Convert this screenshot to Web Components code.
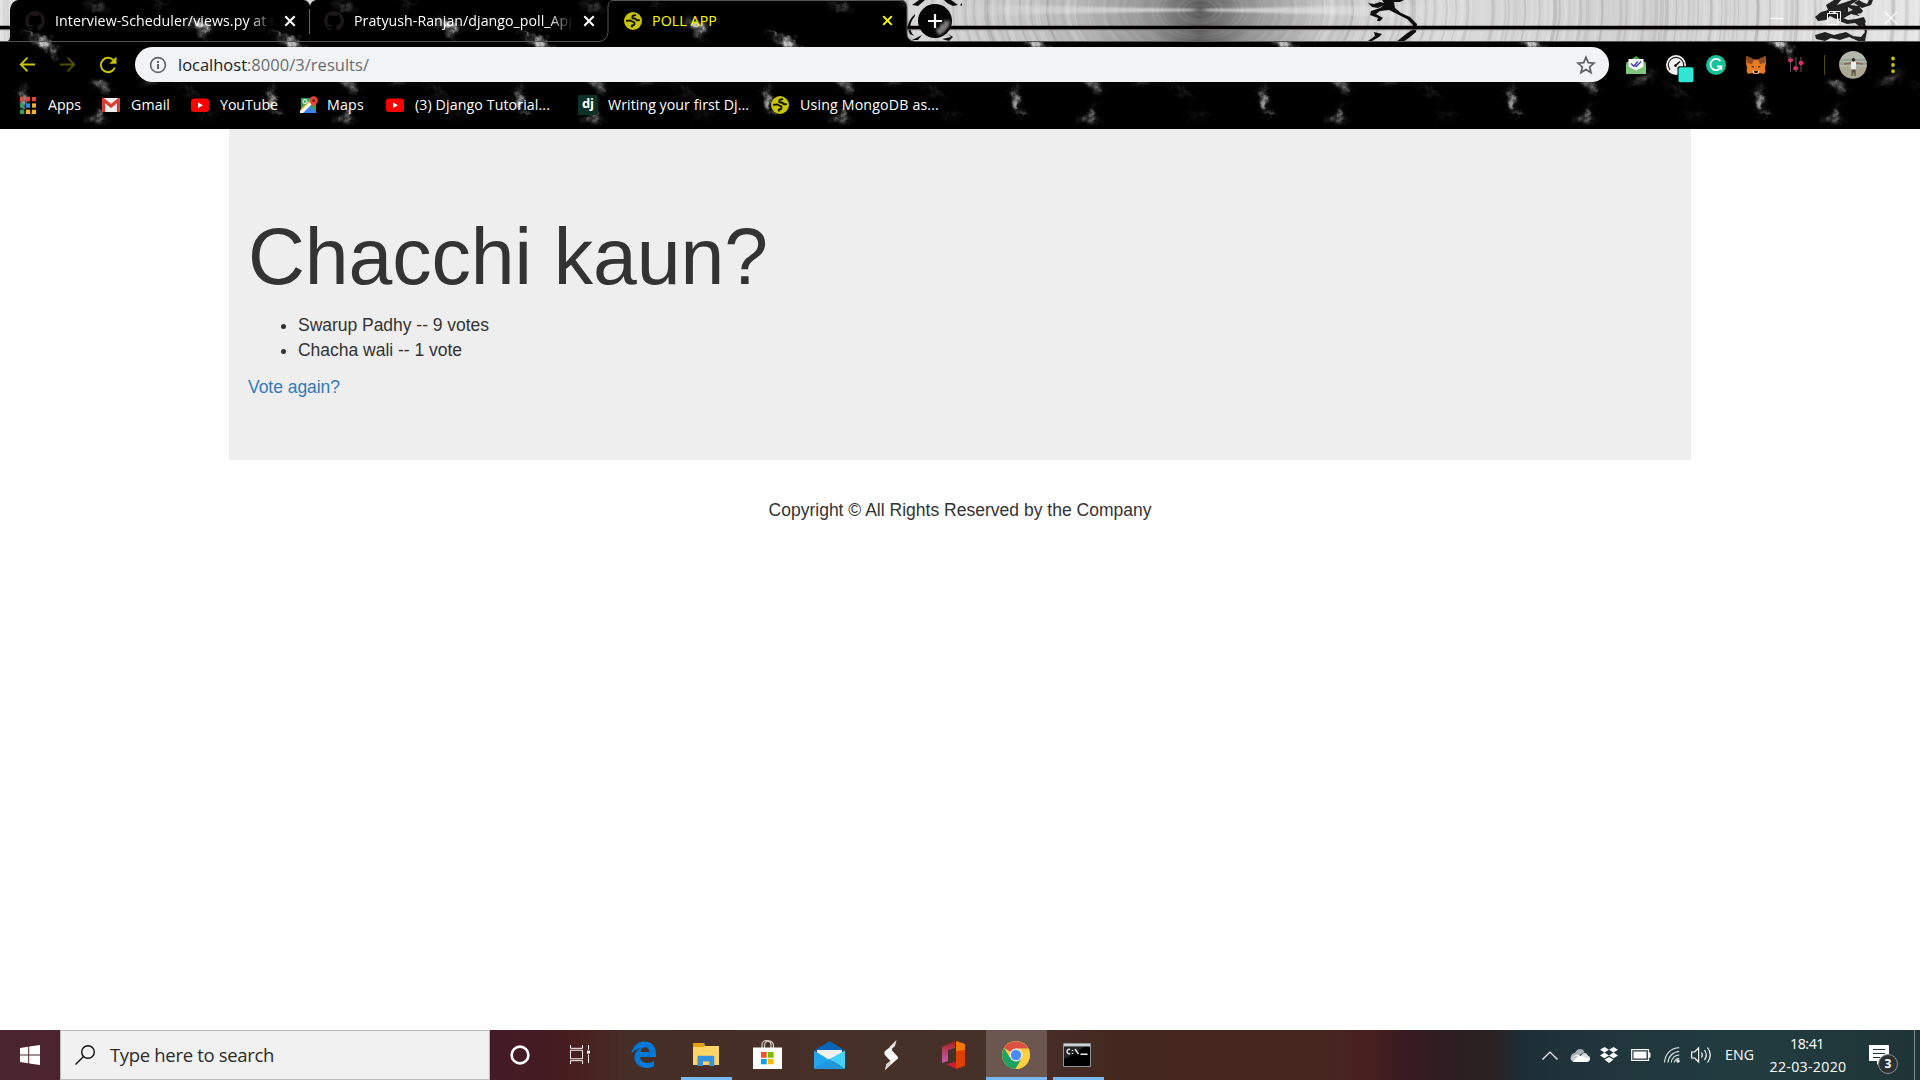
<!DOCTYPE html>
<html lang="en"><head><meta charset="utf-8"><title>POLL APP</title>
<style>
html,body{margin:0;height:100%;overflow:hidden;background:#fff}
body{font-family:"Open Sans","Noto Sans",sans-serif}
</style></head><body>
<app-desktop></app-desktop>
<script>
const define=(name,html,setup)=>{
  const t=document.createElement('template');t.innerHTML=html;
  customElements.define(name,class extends HTMLElement{
    constructor(){super();this.attachShadow({mode:'open'}).append(t.content.cloneNode(true));}
    connectedCallback(){if(setup)setup(this,this.shadowRoot);}
  });
};
const globe='<circle cx="9" cy="9" r="9" fill="#c8c400"/><path d="M12 2.800L8.600 3.900l-.3 2.300 3.300.6 1.200 1.500 3-.2M2 8.900l4.200-.4 4.200 2-.2 2.300-2.500.9.700 1.800" fill="none" stroke="#111" stroke-width="1.900" stroke-linejoin="round"/>';
const yt='<rect y="2.500" width="18" height="13.500" rx="3" fill="#f00"/><path d="M7 6.500l5 2.800-5 2.800z" fill="#fff"/>';
const icons={
github:['0 0 16 16','<path fill="#1b1718" fill-rule="evenodd" d="M8 0C3.580 0 0 3.580 0 8c0 3.540 2.290 6.530 5.470 7.590.4.070.55-.17.55-.38v-1.490c-2.010.37-2.530-.49-2.690-.94-.09-.23-.48-.94-.82-1.130-.28-.15-.68-.52-.01-.53.63-.01 1.080.58 1.230.82.72 1.210 1.870.87 2.330.66.07-.52.28-.87.51-1.070-1.780-.2-3.640-.89-3.640-3.950 0-.87.31-1.590.82-2.150-.08-.2-.36-1.020.08-2.120 0 0 .67-.21 2.200.82a7.700 7.700 0 0 1 4 0c1.530-1.040 2.200-.82 2.200-.82.44 1.100.16 1.920.08 2.120.51.56.82 1.270.82 2.150 0 3.070-1.870 3.750-3.650 3.950.29.25.54.73.54 1.480v2.200c0 .21.15.46.55.38A8 8 0 0 0 8 0z"/>'],
globe:['0 0 18 18',globe],
x:['0 0 12 12','<path d="M1.300 1.300l9.400 9.400M10.700 1.300l-9.400 9.400" stroke="currentColor" stroke-width="2.100"/>'],
back:['0 0 18 18','<path d="M17 9H2M9 1.800L1.800 9 9 16.200" fill="none" stroke="currentColor" stroke-width="2"/>'],
fwd:['0 0 18 18','<path d="M1 9h15M9 1.800L16.200 9 9 16.200" fill="none" stroke="currentColor" stroke-width="2"/>'],
reload:['0 0 18 18','<path d="M15.800 11.500A7.200 7.200 0 1 1 14.300 4" fill="none" stroke="currentColor" stroke-width="2"/><path d="M17.500.5v7.300h-7.300z" fill="currentColor"/>'],
info:['0 0 18 18','<circle cx="9" cy="9" r="7.400" fill="none" stroke="#5f6368" stroke-width="1.600"/><path d="M8 8h2v5H8zM8 5h2v1.900H8z" fill="#5f6368"/>'],
star:['0 0 18 18','<path d="M9 2l2.050 4.850 5.200.45-3.950 3.450 1.200 5.100L9 13.150l-4.500 2.700 1.200-5.100L1.750 7.300l5.200-.45z" fill="none" stroke="#5f6368" stroke-width="1.600"/>'],
apps:['0 0 16 16',(()=>{const c=['#e8453c','#e8453c','#e8453c','#2f9e58','#2d8bf0','#f0b02d','#2f9e58','#f0b02d','#f0b02d'];return c.map((f,i)=>`<rect x="${i%3*6}" y="${Math.floor(i/3)*6}" width="4" height="4" fill="${f}"/>`).join('')})()],
gmail:['0 0 18 14','<rect width="18" height="14" rx="1.200" fill="#eee"/><path d="M1.600 14V2L9 8l7.400-6v12" fill="none" stroke="#d6362c" stroke-width="3"/><path d="M3 0h12L9 5z" fill="#f7f7f7"/><path d="M.5.6L9 7.600 17.500.6" fill="none" stroke="#dd4236" stroke-width="2"/>'],
yt:['0 0 18 18',yt],
maps:['0 0 18 18','<path d="M1 2h15v15H1z" fill="#2fa35a"/><path d="M1 17l8-8 8 8z" fill="#3e82f1"/><path d="M0 14.500L14 2l2 2L3 17H0z" fill="#fff"/><path d="M1 13L12 2h2L1 15z" fill="#f4c430"/><circle cx="5" cy="5.500" r="1.900" fill="none" stroke="#d8f0df" stroke-width="1.200"/><path d="M13.500 12c-.4-3-4-4-4-7.500a4.200 4.200 0 0 1 8.400 0c0 3.500-4 4.500-4.400 7.500z" fill="#e2453a"/><circle cx="13.700" cy="4.500" r="1.500" fill="#7d2019"/>'],
mailext:['0 0 20 18','<path d="M0 7l10-7 10 7z" fill="#4b9f4c"/><rect y="6" width="20" height="12" rx="1.500" fill="#69b567"/><path d="M2.500 3h15v8L10 15 2.500 11z" fill="#fff"/><path d="M0 8.500l3 2.500 7 3.500 7-3.500 3-2.500V17a1 1 0 0 1-1 1H1a1 1 0 0 1-1-1z" fill="#80c67c"/><path d="M5 7.500l2.800 2.800 4-4.800M9 9.500l1.300 1L15 5.500" fill="none" stroke="#453bc4" stroke-width="1.400"/>'],
gauge:['0 0 28 28','<circle cx="10" cy="10" r="10" fill="#f1f1f1"/><circle cx="10" cy="10" r="7.700" fill="none" stroke="#222" stroke-width="1.200" stroke-dasharray="36 13" transform="rotate(140 10 10)"/><path d="M9.500 10.500L14 6.500" stroke="#111" stroke-width="1.600"/><circle cx="9.600" cy="10.600" r="1.400" fill="#111"/><rect x="11.500" y="11.300" width="16.500" height="16.500" rx="2" fill="#000"/><rect x="12.500" y="12.300" width="15" height="15" rx="1.800" fill="#2ee6d3"/>'],
grammar:['0 0 20 20','<circle cx="10" cy="10" r="10" fill="#15c39a"/><path d="M14.400 6A5.600 5.600 0 1 0 15.300 11.500H11M15.300 11v4" fill="none" stroke="#fff" stroke-width="1.800"/>'],
fox:['0 0 20 18','<path d="M.5 0L8 3.500h4L19.500 0 20 7l-1 5 .5 3-1.500 3-4-1-2 1H8l-2-1-4 1-1.500-3L1 12 0 7z" fill="#e97a20"/><path d="M.5 0L8 3.500 6 8 1 7zM19.500 0L12 3.500 14 8l5-1z" fill="#8f4b22"/><path d="M5 10l3 .3L7.500 12zM15 10l-3 .3.500 1.700z" fill="#263340"/><path d="M6 14l1.500 3.500h5L14 14l-2 1H8z" fill="#dbc5b8"/><path d="M8 15h4l-.5 2h-3z" fill="#171717"/>'],
sliders:['0 0 16 16','<path d="M2.500 1v14M8 1v14M13 1v14" stroke="#59505a" stroke-width="1.100"/><g fill="#c02d5d" stroke="#fa3b7c"><ellipse cx="2.500" cy="4" rx="2" ry="1.100"/><ellipse cx="7.700" cy="11.500" rx="2" ry="1.400"/><ellipse cx="13" cy="6.500" rx="2" ry="1.400"/></g>'],
avatar:['0 0 28 28','<defs><clipPath id="c"><circle cx="14" cy="14" r="13.800"/></clipPath></defs><g clip-path="url(#c)"><path d="M0 0h28v28H0z" fill="#aaa894"/><path d="M0 0h28v8H0z" fill="#b3b7ab"/><path d="M0 8h28v6H0z" fill="#96a496"/><path d="M0 10.500h28M0 15h28" stroke="#b9beb2"/><path d="M5 13l7-1h5l7 1" fill="none" stroke="#8a6656" stroke-width="1.300"/><circle cx="14.500" cy="8.700" r="1.700" fill="#2c211e"/><path d="M12 11h5v7.500h-5z" fill="#ecebf0"/><path d="M12.500 18.500h4.200v6.500h-1.200l-1-4-1 4h-1z" fill="#655446"/></g>'],
dots:['0 0 6 18','<g fill="#c8c400"><circle cx="3" cy="2.500" r="1.900"/><circle cx="3" cy="9" r="1.900"/><circle cx="3" cy="15.200" r="1.900"/></g>'],
plus:['0 0 34 34','<circle cx="17" cy="17" r="17" fill="#040404"/><path d="M19 29l-1-5 3 1 2-6 2 2 2-6 2 3 3-3-1 7-4 5-5 4z" fill="#999" opacity=".8" filter="url(#b)"/><defs><filter id="b"><feGaussianBlur stdDeviation="1.200"/></filter></defs><path d="M17 10v14M10 17h14" stroke="#fff" stroke-width="2.200"/>'],
min:['0 0 14 14','<path d="M.5 7.500h13" stroke="#fff"/>'],
restore:['0 0 14 14','<path d="M.5 2.500h10v11H.5zM2.500 2.500v-2h11v10h-3" fill="none" stroke="#fff"/>'],
close:['0 0 14 14','<path d="M.7.7l12.600 12.600M13.300.7L.7 13.300" stroke="#fff" stroke-width="1.200"/>'],
win:['0 0 20 20','<path d="M0 2.900l8.200-1.100v7.700H0zM9.200 1.600L20 0v9.500H9.200zM0 10.500h8.200v7.700L0 17.100zM9.200 10.500H20V20L9.200 18.400z" fill="#fff"/>'],
search:['0 0 20 20','<circle cx="13" cy="7" r="6.300" fill="none" stroke="#111" stroke-width="1.400"/><path d="M8.500 11.500L.5 19.500" stroke="#111" stroke-width="1.400"/>'],
cortana:['0 0 20 20','<circle cx="10" cy="10" r="8.400" fill="none" stroke="#fff" stroke-width="2.600"/>'],
task:['0 0 20 20','<path d="M.5 0v3.500h12V0M.5 20v-3.500h12V20M.5 5.500h12v9H.5zM18.500 0v5M18.500 10v9" fill="none" stroke="#fff"/><path d="M17 6h3v3h-3z" fill="#fff"/>'],
edge:['0 0 25 27','<path d="M0 13C2 5 7 .5 13.500.5 20.500.5 25 5.500 25 12v4H9c.3 4 4 6 8 6 2.500 0 4.500-.8 6-2v5.200c-2 1.200-4.600 1.800-7.300 1.800C8.500 27 3 22 3.500 15.500 3.800 11.500 6.500 8.500 10 7 6 7.500 2.500 9.500 0 13zM9.500 11h8.700c0-2.800-1.500-4.700-4.200-4.700-2.500 0-4.200 2-4.500 4.700z" fill="#0078d7"/>'],
folder:['0 0 26 23','<path d="M0 0h10.500L12 3H26v19H0z" fill="#ffd768"/><path d="M0 0h11l1 2-1 2H0z" fill="#e3a007"/><path d="M0 5h26v17H0z" fill="#ffd666"/><path d="M4.500 23v-9q0-1.200 1-1.200h14.800q1 0 1 1.200v9h-5v-4.500H10V23z" fill="#3893dd"/>'],
store:['0 0 29 29','<path d="M9 9V5.500a4.500 4.500 0 0 1 9-1V9M11.500 9V5.500a4.500 4.500 0 0 1 9 0V9" fill="none" stroke="#cfc9c6" stroke-width="1.300"/><path d="M0 7.500h29V29H0z" fill="#fff"/><path d="M8 12h5.700v5.700H8z" fill="#f25022"/><path d="M15 12h5.700v5.700H15z" fill="#7fba00"/><path d="M8 19h5.700v5.300H8z" fill="#00a4ef"/><path d="M15 19h5.700v5.300H15z" fill="#ffb900"/>'],
mail:['0 0 31 28','<path d="M0 9.500L15.500 0 31 9.500z" fill="#0964b5"/><path d="M3 9h25v11H3z" fill="#f1f1f1"/><path d="M0 9.500L15.500 19 0 28z" fill="#22a5ec"/><path d="M31 9.500L15.500 18 31 28z" fill="#45d1fa"/><path d="M0 28l15.500-10L31 28z" fill="#2197e2"/>'],
bolt:['0 0 14 30','<path d="M8 5.500L.5 11.500v3l6 6.500L2.500 24 1 30l6-5.500 7-6v-1.500L8 10.500z" fill="#fff"/><path d="M12.500 0L6 6.500 5.500 11 11 6z" fill="#e9e5e4"/><path d="M6.500 21L2.500 24 1 30l6-5.500z" fill="#d9d4d2"/>'],
office:['0 0 23 28','<defs><linearGradient id="o" x2="0" y2="1"><stop stop-color="#a42018"/><stop offset=".55" stop-color="#bb4477"/><stop offset="1" stop-color="#bd5eb4"/></linearGradient></defs><path d="M0 6L13 0v7L6 9v11l-6 2z" fill="url(#o)"/><path d="M14 0l9 3v22l-9 3z" fill="#dc4103"/><path d="M14 0l9 3v6l-9 1z" fill="#ef7904"/><path d="M4 23l10-2v7z" fill="#cc1d35"/>'],
chrome:['0 0 28 28','<circle cx="14" cy="14" r="14" fill="#ffcd42"/><path d="M14 14L1.900 7A14 14 0 0 1 26.100 7.200z" fill="#dd5144"/><path d="M1.900 7A14 14 0 0 0 13.500 28L20 17.500 14 14 8 16.500z" fill="#1ba261"/><path d="M14 7.500h12.300A14 14 0 0 1 13.500 28l6-10.500z" fill="#ffcd42"/><circle cx="14" cy="14" r="6.500" fill="#f1f1f1"/><circle cx="14" cy="14" r="5.200" fill="#4c8bf5"/>'],
cmd:['0 0 28 24','<path d="M.5.5h27v23H.5z" fill="#000" stroke="#8f969c"/><path d="M1 1h26v2.500H1z" fill="#c8d0d6"/><path d="M1 4h20L6 14 1 16z" fill="#252525"/><path d="M7 6.500C3 5 3 12 7 10.500M9.500 7v1M9.500 10v1M12 6l3.500 5M17.500 11.300h7" fill="none" stroke="#eee" stroke-width="1.400"/>'],
chev:['0 0 16 9','<path d="M.5 8.500L8 1l7.500 7.500" fill="none" stroke="#fff" stroke-width="1.200"/>'],
cloud:['0 0 20 13','<path d="M1 10C0 6 3 4 5 4c2-5 8-5 9.500-1L8 7z" fill="#a9b2b4"/><path d="M3.500 13A3.500 3.500 0 0 1 4 7.200C8 4 10 7 11 7c2-4 6-3 6.500-.5A3.300 3.300 0 0 1 17 13z" fill="#fff"/><path d="M1 8c2-2 5-2 7-.5l-5 5C1 12 0 10 1 8z" fill="#c7cdce"/><path d="M11 7c2-4 6-3 6.500-.5 1.500.3 2.500 1.500 2.300 3z" fill="#d5dadb"/>'],
dropbox:['0 0 18 16','<path d="M4.500 0L9 2.800 4.500 5.600 0 2.800zM13.500 0L18 2.800l-4.500 2.800L9 2.800zM4.500 5.600L9 8.400l-4.500 2.800L0 8.400zM13.500 5.600L18 8.400l-4.500 2.800L9 8.400zM9 10l4.500 2.500L9 16l-4.500-3.500z" fill="#fff"/>'],
battery:['0 0 20 12','<path d="M.7.7h16.800v10.600H.7z" fill="none" stroke="#fff" stroke-width="1.200"/><path d="M2.500 2.500h13v7h-13zM18 3.500h1.500v5H18z" fill="#fff"/>'],
wifi:['0 0 16 16','<path d="M.7 15.500A14.500 14.500 0 0 1 15.300.7M4 15.500A11.500 11.500 0 0 1 15.300 4.500M7.200 15.500A8 8 0 0 1 15.300 8M10.300 15.500a5 5 0 0 1 5-4" fill="none" stroke="#e5eaea" stroke-width="1.100"/><circle cx="14" cy="14" r="1.700" fill="#fff"/>'],
sound:['0 0 21 18','<path d="M.6 6v6h3l4 4V2l-4 4z" fill="none" stroke="#fff" stroke-width="1.200"/><path d="M10.500 6.500q1.500 2.500 0 5M13.500 4q3.500 5 0 10M16.500 1.500q5.500 7.500 0 15" fill="none" stroke="#fff" stroke-width="1.200"/>'],
note:['0 0 20 20','<path d="M0 0h20v16h-8l-4 4v-4H0z" fill="#fff"/><path d="M4 4.500h12M4 8.500h12M4 12.500h7" stroke="#223b3f" stroke-width="1.200"/>']
};
customElements.define('ui-icon',class extends HTMLElement{
  constructor(){super();this.attachShadow({mode:'open'});}
  connectedCallback(){
    const [vb,body]=icons[this.getAttribute('name')],w=this.getAttribute('w'),h=this.getAttribute('h')||w;
    this.shadowRoot.innerHTML=`<style>:host{display:block;flex:none;width:${w}px;height:${h}px}svg{display:block}</style><svg width="${w}" height="${h}" viewBox="${vb}" preserveAspectRatio="none">${body}</svg>`;
  }
});
/* Spreads its text over the width given in the w attribute. */
define('fit-text','<style>:host{display:block;flex:none;white-space:pre}span{display:inline-block}</style><span><slot></slot></span>',(el,r)=>{
  const s=r.querySelector('span');s.style.letterSpacing='0';
  const w=+el.getAttribute('w'),n=el.textContent.length,nat=s.getBoundingClientRect().width;
  s.style.letterSpacing=((w-nat)/n)+'px';el.style.width=w+'px';
});
/* Tiled dark smoke theme with the brushed metal frame behind the tab strip. */
const wisp=(x,y,w,h,o,a=0)=>`<g transform="translate(${x} ${y}) rotate(${a})" opacity="${o}"><ellipse rx="${w*1.3}" ry="${h*1.3}" fill="url(#q)"/></g>`;
const tile=wisp(40,42,13,6,.95,12)+wisp(47,44,8,5,.8)+wisp(54,52,5,9,.5,-20)+wisp(31,34,10,3,.45,10)+wisp(199,25,13,6,.95,15)+wisp(207,31,8,8,.8,30)+wisp(98,6,12,7,.5,25)+wisp(101,84,11,5,.5,10)+wisp(106,90,7,6,.5)+wisp(99,113,5,10,.55,25)+wisp(97,120,11,5,.6)+wisp(24,98,5,14,.8,-5)+wisp(26,103,5,6,.6)+wisp(28,114,9,5,.3)+wisp(154,78,15,6,.38,-25)+wisp(188,91,16,4,.15,30)+wisp(205,115,12,6,.14)+wisp(160,4,12,5,.12);
let streaks='';let seed=7;const rnd=()=>(seed=(seed*16807)%2147483647)/2147483647;
for(let i=0;i<240;i++){const r=8+i*5+rnd()*5,d=rnd()>.5,k=r<120?.4:.75;streaks+=`<ellipse cx="1200" cy="10" rx="${r.toFixed(1)}" ry="${(r*.6).toFixed(1)}" fill="none" stroke="${d?'#fff':'#666'}" stroke-width="${(1+rnd()*3).toFixed(1)}" opacity="${((.06+rnd()*.2)*k).toFixed(2)}"/>`;}
const ink='<path d="M1368 3l6 1 6-2 4 1-2-3h22l-4 2h-6l1 6 6 5 9 4 7 7-1 8-6 5-7 5h-7l10-8 6-4 1-5-6-6-12-6-6-3-9 1-4 3 7 4-3 3-3 0 1-3-8-3 1-4 9-3 4-3-6 3-6-1z"/><path d="M1368 41l7-5-1-4 8 2-3 3-7 4z"/><path d="M1826 5l8-5h7l-4 5 9-3 6-2h6l-8 5 9 1 4 5-4 5-8-2-7 4-8 1-6-3-4 4-8 1-3-4 6-5 7-2zM1854 3l8 5 9-3 2-5h-4l-2 4-5-2-3-2zM1841 17l7 3 8-1 8-2 2 5-6 5-5-4-8 1-8-3zM1815 35l10-3 9 3 12-3 7 4 8 1 4-5-3-7 3-2 2 8-2 10h-7l-9-4-9 3-9-2-6 3-9-2z" fill="#222"/><path d="M1848 7l5 3-5 2zM1832 12l5-1-2 3zM1857 14l4-1-1 3z" fill="#c8c8c8"/><path d="M912 5l7-5h6l-7 6zM944 0h7l7 5-5 1-6-3zM915 16q-9 11-1 20l-4-2q-6-10 5-20zM912 40l10-5-4 5zM942 39l9-2-3-3 5 3-4 4zM960 5l2-2v3z"/>';
define('chrome-theme',`<style>:host{display:block;position:absolute;inset:0;background:#000}svg{display:block}</style>
<svg width="1920" height="129" viewBox="0 0 1920 129"><defs>
<radialGradient id="q"><stop stop-color="#eee"/><stop offset=".3" stop-color="#ccc" stop-opacity=".65"/><stop offset=".65" stop-color="#999" stop-opacity=".25"/><stop offset="1" stop-color="#888" stop-opacity="0"/></radialGradient>
<linearGradient id="m" gradientUnits="userSpaceOnUse" x1="0" x2="1920"><stop stop-color="#e0e0e0"/><stop offset=".48" stop-color="#d6d6d6"/><stop offset=".56" stop-color="#bababa"/><stop offset=".6" stop-color="#949494"/><stop offset=".625" stop-color="#5c5c5c"/><stop offset=".65" stop-color="#949494"/><stop offset=".69" stop-color="#c8c8c8"/><stop offset=".75" stop-color="#dadada"/><stop offset=".85" stop-color="#d0d0d0"/><stop offset="1" stop-color="#e5e5e5"/></linearGradient>
<linearGradient id="h" gradientUnits="userSpaceOnUse" x1="960" x2="1440"><stop stop-color="#fff" stop-opacity="0"/><stop offset=".4" stop-color="#fff" stop-opacity=".8"/><stop offset=".48" stop-color="#fff"/><stop offset=".5" stop-color="#777"/><stop offset=".52" stop-color="#fff"/><stop offset=".6" stop-color="#fff" stop-opacity=".8"/><stop offset="1" stop-color="#fff" stop-opacity="0"/></linearGradient>
<filter id="f" x="0" y="0" width="100%" height="100%"><feTurbulence type="fractalNoise" baseFrequency=".1" numOctaves="5" seed="23" result="n"/><feDisplacementMap in="SourceGraphic" in2="n" scale="13" xChannelSelector="R" yChannelSelector="G" result="d"/><feColorMatrix in="n" type="matrix" values="0 0 0 0 1 0 0 0 0 1 0 0 0 0 1 0 0 2.400 0 -.45" result="a"/><feComposite in="d" in2="a" operator="in" result="e"/><feGaussianBlur in="e" stdDeviation=".7"/></filter>
<filter id="s"><feGaussianBlur stdDeviation=".6"/></filter><filter id="s2"><feGaussianBlur stdDeviation=".8"/></filter>
<clipPath id="k"><path d="M0 0h1920v41H0z"/></clipPath>
<clipPath id="t"><path d="M0 41h8q2-1 2-5V10Q11 1 18 0h286q5 1 6 6 1-5 6-6h586q5 1 5 7v26q0 8 8 9h1005v87H0z"/></clipPath>
<g id="w"><g filter="url(#f)"><path d="M0 0h248v129H0z" fill="none"/>${tile}</g></g></defs>
<g clip-path="url(#k)"><path d="M0 0h1920v41H0z" fill="url(#m)"/><g filter="url(#s)">${streaks}</g><path d="M960 4L1200 9.300 1440 4V18L1200 10.700 960 16z" fill="url(#h)" opacity=".7" filter="url(#s2)"/><g filter="url(#s)" fill="#111">${ink}</g><path d="M0 27.500h1920" stroke="#000" stroke-width="3.500"/><path d="M0 29.700h1920" stroke="#776b6c"/></g>
<g clip-path="url(#t)"><path d="M0 0h1920v129H0z" fill="#000"/>${[0,1,2,3,4,5,6,7].map(i=>`<use href="#w" x="${i*248}"/>`).join('')}</g>
<path d="M0 41.500h598q9 0 10-9V7q0-6 5-6.500h288q6 .5 6 7v26q0 7 8 8h1005" fill="none" stroke="#555"/><path d="M309.500 9v25" stroke="#666"/></svg>`);
define('browser-tab',`<style>:host{display:flex;align-items:center;flex:none;color:#fff;font-size:14.200px;height:41px}
.t{overflow:hidden;margin-left:10px;margin-right:1px;flex:none}:host([fade]) .t{-webkit-mask-image:linear-gradient(90deg,#000 calc(100% - 24px),transparent);mask-image:linear-gradient(90deg,#000 calc(100% - 24px),transparent)}</style>
<slot name="icon"></slot><div class="t"><slot></slot></div><slot name="close"></slot>`,(el,r)=>{r.querySelector('.t').style.width=el.getAttribute('tw')+'px'});
define('tab-strip',`<style>:host{display:flex;height:41px;flex:none}browser-tab{box-sizing:border-box}.n{margin:4px 0 0 22px}.w{display:flex;margin-left:auto;padding:11px 22px 0 0;gap:43px}</style>
<browser-tab fade tw="219" style="width:299px;padding-left:25px"><ui-icon slot="icon" name="github" w="20"></ui-icon><fit-text w="221">Interview-Scheduler/views.py at r</fit-text><ui-icon slot="close" name="x" w="12" style="margin-left:9px"></ui-icon></browser-tab>
<browser-tab fade tw="219" style="width:299px;padding-left:25px"><ui-icon slot="icon" name="github" w="20"></ui-icon><fit-text w="223">Pratyush-Ranjan/django_poll_App</fit-text><ui-icon slot="close" name="x" w="12" style="margin-left:9px"></ui-icon></browser-tab>
<browser-tab tw="220" style="width:298px;padding-left:26px;color:#ff0"><ui-icon slot="icon" name="globe" w="18"></ui-icon><fit-text w="65">POLL APP</fit-text><ui-icon slot="close" name="x" w="11" style="margin-left:9px"></ui-icon></browser-tab>
<ui-icon class="n" name="plus" w="34"></ui-icon><div class="w"><ui-icon name="min" w="14"></ui-icon><ui-icon name="restore" w="14"></ui-icon><ui-icon name="close" w="14"></ui-icon></div>`);
define('tool-bar',`<style>:host{display:flex;align-items:center;height:47px;flex:none;color:#c8c400;box-sizing:border-box;padding:0 21px 0 19px}
.o{display:flex;align-items:center;background:#f1f3f4;height:35px;border-radius:18px;width:1474px;box-sizing:border-box;padding:0 14px;margin-left:18px;color:#202124;font-size:16.500px;flex:none}
.g{color:#6a6d71}.s{margin-left:auto}.sep{width:1px;height:20px;background:#524d00;flex:none}</style>
<ui-icon name="back" w="17"></ui-icon><ui-icon name="fwd" w="17" style="margin-left:23px;opacity:.4"></ui-icon><ui-icon name="reload" w="18" style="margin-left:23px"></ui-icon>
<div class="o"><ui-icon name="info" w="18"></ui-icon><fit-text w="69" style="margin-left:11px">localhost</fit-text><fit-text class="g" w="122">:8000/3/results/</fit-text><ui-icon class="s" name="star" w="20" style="margin-right:-1px"></ui-icon></div>
<ui-icon name="mailext" w="20" h="18" style="margin-left:17px"></ui-icon><ui-icon name="gauge" w="28" style="margin:8px 0 0 20px"></ui-icon><ui-icon name="grammar" w="20" style="margin-left:12px"></ui-icon><ui-icon name="fox" w="20" h="18" style="margin-left:20px"></ui-icon><ui-icon name="sliders" w="16" h="17" style="margin-left:22px"></ui-icon><div class="sep" style="margin-left:20px"></div><ui-icon name="avatar" w="28" style="margin-left:14px"></ui-icon><ui-icon name="dots" w="6" h="18" style="margin-left:23px"></ui-icon>`);
define('book-mark','<style>:host{display:flex;align-items:center;flex:none}::slotted(fit-text){margin-left:var(--gap,12px);margin-top:-2px}</style><slot></slot>');
define('bookmark-bar',`<style>:host{display:flex;align-items:center;height:34px;flex:none;padding-left:20px;color:#fff;font-size:14.200px}
.dj{width:20px;height:20px;background:#0c3127;border-radius:1px;font:bold 13px/17px "Open Sans",sans-serif;text-align:center;flex:none}</style>
<book-mark><ui-icon name="apps" w="16" h="17"></ui-icon><fit-text w="33">Apps</fit-text></book-mark>
<book-mark style="margin-left:21px;--gap:11px"><ui-icon name="gmail" w="18" h="14"></ui-icon><fit-text w="39">Gmail</fit-text></book-mark>
<book-mark style="margin-left:21px;--gap:11px"><ui-icon name="yt" w="18"></ui-icon><fit-text w="58">YouTube</fit-text></book-mark>
<book-mark style="margin-left:22px;--gap:9px"><ui-icon name="maps" w="18"></ui-icon><fit-text w="37">Maps</fit-text></book-mark>
<book-mark style="margin-left:22px;--gap:11px"><ui-icon name="yt" w="18"></ui-icon><fit-text w="135">(3) Django Tutorial...</fit-text></book-mark>
<book-mark style="margin-left:28px;--gap:10px"><div class="dj">dj</div><fit-text w="141">Writing your first Dj...</fit-text></book-mark>
<book-mark style="margin-left:22px;--gap:11px"><ui-icon name="globe" w="18"></ui-icon><fit-text w="139">Using MongoDB as...</fit-text></book-mark>`);
define('browser-chrome',`<style>:host{display:block;position:relative;height:129px;flex:none}.r{position:relative;display:flex;flex-direction:column}</style><chrome-theme></chrome-theme><div class="r"><tab-strip></tab-strip><tool-bar></tool-bar><bookmark-bar></bookmark-bar></div>`);
define('poll-page',`<style>:host{display:block;flex:1;background:#fff;color:#333;font:17.500px/25px "Liberation Sans",Arial,sans-serif}
.j{box-sizing:border-box;width:1462px;height:331px;margin:0 auto;padding:85px 19px 0;background:#eee}
h1{font-size:78.750px;line-height:87px;font-weight:500;margin:0 0 12px}ul{margin:0 0 12px;padding-left:50px}a{color:#337ab7;text-decoration:none}.c{display:flex;justify-content:center;margin-top:38px}</style>
<div class="j"><h1><fit-text w="520">Chacchi kaun?</fit-text></h1><ul><li><fit-text w="191">Swarup Padhy -- 9 votes</fit-text></li><li><fit-text w="164">Chacha wali -- 1 vote</fit-text></li></ul><a href="#"><fit-text w="92">Vote again?</fit-text></a></div>
<div class="c"><fit-text w="383">Copyright © All Rights Reserved by the Company</fit-text></div>`);
define('task-item',`<style>:host{display:flex;align-items:center;justify-content:center;height:50px;box-sizing:border-box;flex:none}:host([open]){box-shadow:inset 0 -3px #76b9f5}:host([active]){background:#6b5750}</style><slot></slot>`,el=>{el.style.width=el.getAttribute('w')+'px'});
define('task-bar',`<style>:host{display:flex;align-items:center;height:50px;flex:none;color:#fff;background:linear-gradient(90deg,#4b2530 0,#441a25 490px,#461c22 560px,#4a1f1e 578px,#452e26 625px,#463129 1000px,#44271f 1130px,#462720 1320px,#48201f 1370px,#3a1a22 1400px,#2c1e22 1450px,#2a2223 1495px,#1e2d35 1520px,#1f343a 1570px,#223c40 1750px,#1f3437 1920px)}
.s{display:flex;align-items:center;box-sizing:border-box;width:430px;height:50px;border:1px solid #b9b9b9;background:#f1f1f1;color:#2b2b2b;padding-left:14px;font-size:18.500px;flex:none}.s fit-text{margin:-2px 0 0 15px}
task-item ui-icon{margin:0 1px 1px 0}
.tray{display:flex;align-items:center;margin-left:auto;flex:none;font-size:14.200px}.clk{display:flex;flex-direction:column;align-items:center;width:78px;margin:-1px 0 0 15px;line-height:23px}.clk fit-text:first-child{margin-right:2px}
.nt{position:relative;margin-left:22px}.b{position:absolute;left:9px;top:9px;width:20px;height:20px;box-sizing:border-box;border:1px solid #8b9294;border-radius:50%;background:#2b3133;font:bold 12px/18px "Open Sans",sans-serif;text-align:center}.e{width:1px;height:50px;background:#7d8b8d;margin-left:25px;margin-right:5px}</style>
<task-item w="60"><ui-icon name="win" w="20" style="margin:0"></ui-icon></task-item><div class="s"><ui-icon name="search" w="20"></ui-icon><fit-text w="164">Type here to search</fit-text></div>
<task-item w="60"><ui-icon name="cortana" w="20" style="margin:0"></ui-icon></task-item><task-item w="60"><ui-icon name="task" w="20" h="19" style="margin-right:0"></ui-icon></task-item><task-item w="68"><ui-icon name="edge" w="25" h="27"></ui-icon></task-item>
<task-item w="51" open style="margin-left:3px"><ui-icon name="folder" w="26" h="23"></ui-icon></task-item><task-item w="71"><ui-icon name="store" w="29"></ui-icon></task-item><task-item w="54"><ui-icon name="mail" w="31" h="28"></ui-icon></task-item><task-item w="69"><ui-icon name="bolt" w="14" h="30"></ui-icon></task-item><task-item w="56"><ui-icon name="office" w="23" h="28"></ui-icon></task-item>
<task-item w="61" open active style="margin-left:4px"><ui-icon name="chrome" w="28"></ui-icon></task-item><task-item w="51" open style="margin-left:6px"><ui-icon name="cmd" w="28" h="24" style="margin-right:3px"></ui-icon></task-item>
<div class="tray"><ui-icon name="chev" w="16" h="9"></ui-icon><ui-icon name="cloud" w="20" h="13" style="margin-left:12px"></ui-icon><ui-icon name="dropbox" w="18" h="16" style="margin-left:10px"></ui-icon><ui-icon name="battery" w="20" h="12" style="margin-left:13px"></ui-icon><ui-icon name="wifi" w="16" style="margin-left:13px"></ui-icon><ui-icon name="sound" w="21" h="18" style="margin-left:11px"></ui-icon><fit-text w="29" style="margin:-1px 0 0 13px">ENG</fit-text>
<div class="clk"><fit-text w="34">18:41</fit-text><fit-text w="77">22-03-2020</fit-text></div><div class="nt"><ui-icon name="note" w="20"></ui-icon><div class="b">3</div></div><div class="e"></div></div>`);
define('app-desktop',`<style>:host{display:flex;flex-direction:column;width:1920px;height:1080px}</style><browser-chrome></browser-chrome><poll-page></poll-page><task-bar></task-bar>`);
</script></body></html>
